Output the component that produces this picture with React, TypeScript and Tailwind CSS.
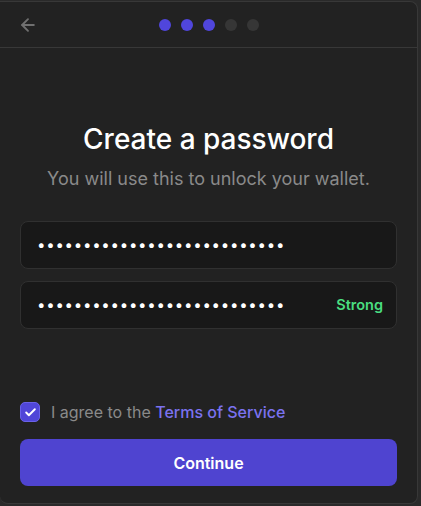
import { ArrowLeft, Check } from 'lucide-react';

const steps = [true, true, true, false, false];
const pw = 'x'.repeat(27);

function PasswordField({ badge }: { badge?: string }) {
  return (
    <div className="flex h-[48px] items-center rounded-lg border border-[#303030] bg-[#181818] pl-4 pr-[13px]">
      <input
        type="password"
        readOnly
        value={pw}
        className="min-w-0 flex-1 bg-transparent text-[15px] tracking-[0.75px] text-white outline-none"
      />
      {badge && <span className="text-[14.5px] font-semibold text-[#4ade80]">{badge}</span>}
    </div>
  );
}

export default function App() {
  return (
    <div className="h-[506px] w-[421px] overflow-hidden bg-[#2a2a2a] pt-px" style={{ fontFamily: 'Inter, "Noto Sans", sans-serif' }}>
      <div className="flex h-[503px] w-[418px] flex-col rounded-r-lg rounded-bl-lg border border-l-0 border-[#383838] bg-[#222222]">
        {/* Header with back arrow and step dots */}
        <div className="relative flex h-[46px] items-center justify-center border-b border-[#383838]">
          <ArrowLeft size={20} strokeWidth={2.25} className="absolute left-[18px] text-[#707070]" />
          <div className="flex gap-[10px]">
            {steps.map((on, i) => (
              <span key={i} className={`h-3 w-3 rounded-full ${on ? 'bg-[#5046dc]' : 'bg-[#363636]'}`} />
            ))}
          </div>
        </div>

        <div className="flex flex-1 flex-col px-5">
          <h1 className="mt-[74px] text-center text-[28px] font-medium leading-[34px] text-white">Create a password</h1>
          <p className="mt-[11px] text-center text-[18px] leading-6 text-[#8a8a8a]">You will use this to unlock your wallet.</p>

          <div className="mt-[30px] flex flex-col gap-3">
            <PasswordField />
            <PasswordField badge="Strong" />
          </div>

          <label className="mt-[71px] flex items-center gap-[11px]">
            <span className="flex h-5 w-5 items-center justify-center rounded-[5px] border border-[#6a62e8] bg-[#5046d8]">
              <Check size={13} strokeWidth={3.5} className="text-white" />
            </span>
            <span className="text-[16px] text-[#8a8a8a]">
              I agree to the <span className="font-medium text-[#7b72f0]">Terms of Service</span>
            </span>
          </label>

          <button className="mt-[15px] h-[47px] w-full rounded-lg bg-[#4f44d0] text-[16px] font-semibold text-white">
            Continue
          </button>
        </div>
      </div>
    </div>
  );
}
